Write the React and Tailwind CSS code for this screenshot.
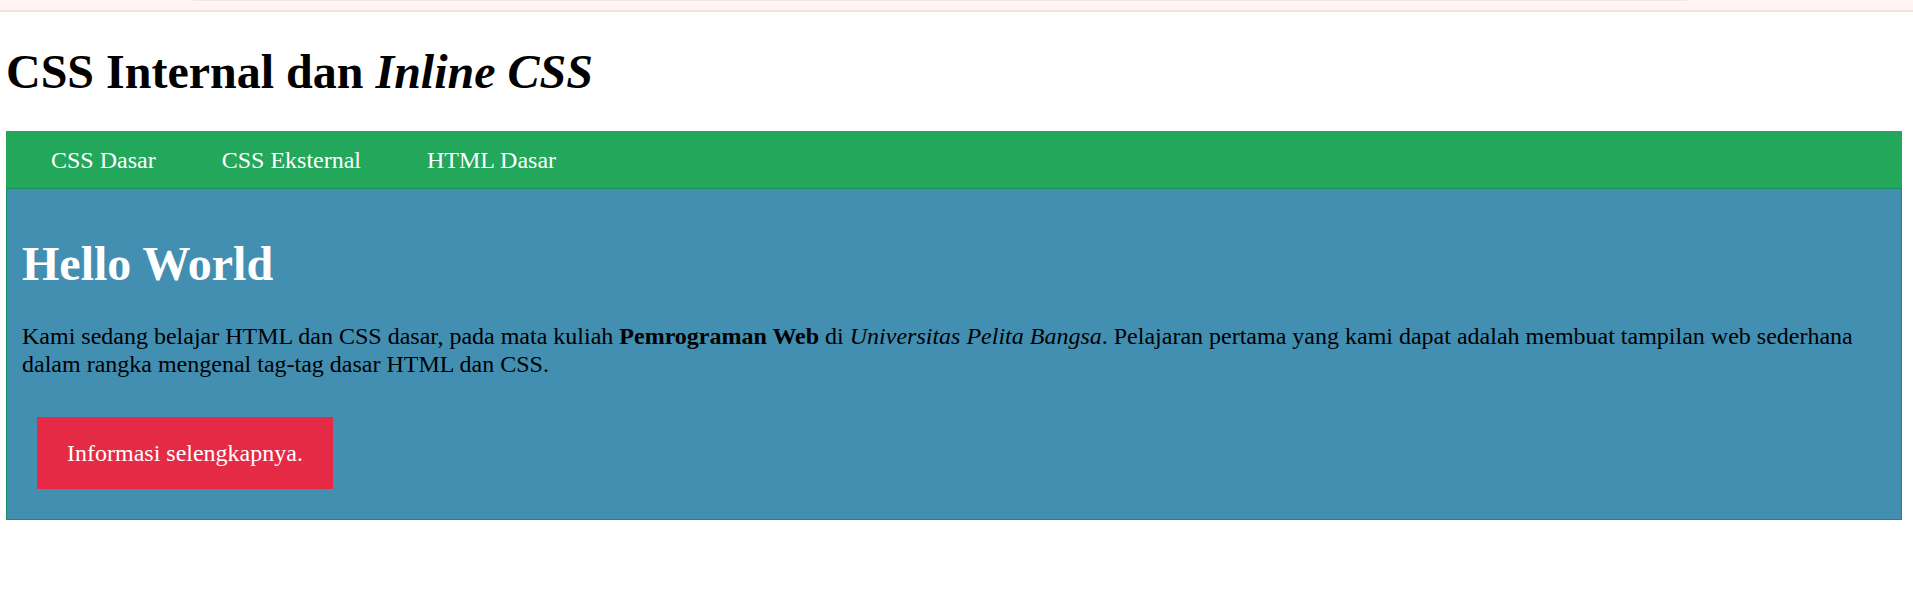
import React from 'react';

const links = ['CSS Dasar', 'CSS Eksternal', 'HTML Dasar'];

export default function App() {
  return (
    <div className="min-h-screen bg-white font-['Liberation_Serif','Times_New_Roman',serif] text-black">
      {/* top strip */}
      <div className="h-[12px] bg-[#fff5f3] border-b-2 border-[#f6e0dc] flex">
        <div className="ml-[193px] w-[1494px] h-[1px] bg-[#f3e7e5]"></div>
      </div>

      <div className="ml-[6px] w-[1896px]">
        <h1 className="mt-[32px] mb-[32px] text-[48px] leading-[55px] font-bold">
          CSS Internal dan <i>Inline CSS</i>
        </h1>

        <nav className="h-[57px] bg-[#22a75b] flex items-center pl-[15px] gap-[6px]">
          {links.map((l) => (
            <a key={l} href="#" className="px-[30px] text-[24px] leading-[28px] text-white">
              {l}
            </a>
          ))}
        </nav>

        <section className="border border-[#18905a] bg-[#428fb2] px-[15px] pb-[30px]">
          <h2 className="pt-[47px] text-[48px] leading-[55px] font-bold text-white">Hello World</h2>
          <p className="mt-[32px] text-[24px] leading-[27.6px] text-black">
            Kami sedang belajar HTML dan CSS dasar, pada mata kuliah <b>Pemrograman Web</b> di{' '}
            <i>Universitas Pelita Bangsa</i>. Pelajaran pertama yang kami dapat adalah membuat tampilan web sederhana
            dalam rangka mengenal tag-tag dasar HTML dan CSS.
          </p>
          <a
            href="#"
            className="inline-block mt-[39px] ml-[15px] h-[72px] px-[30px] bg-[#e52a45] text-white text-[24px] leading-[72px]"
          >
            Informasi selengkapnya.
          </a>
        </section>
      </div>
    </div>
  );
}
